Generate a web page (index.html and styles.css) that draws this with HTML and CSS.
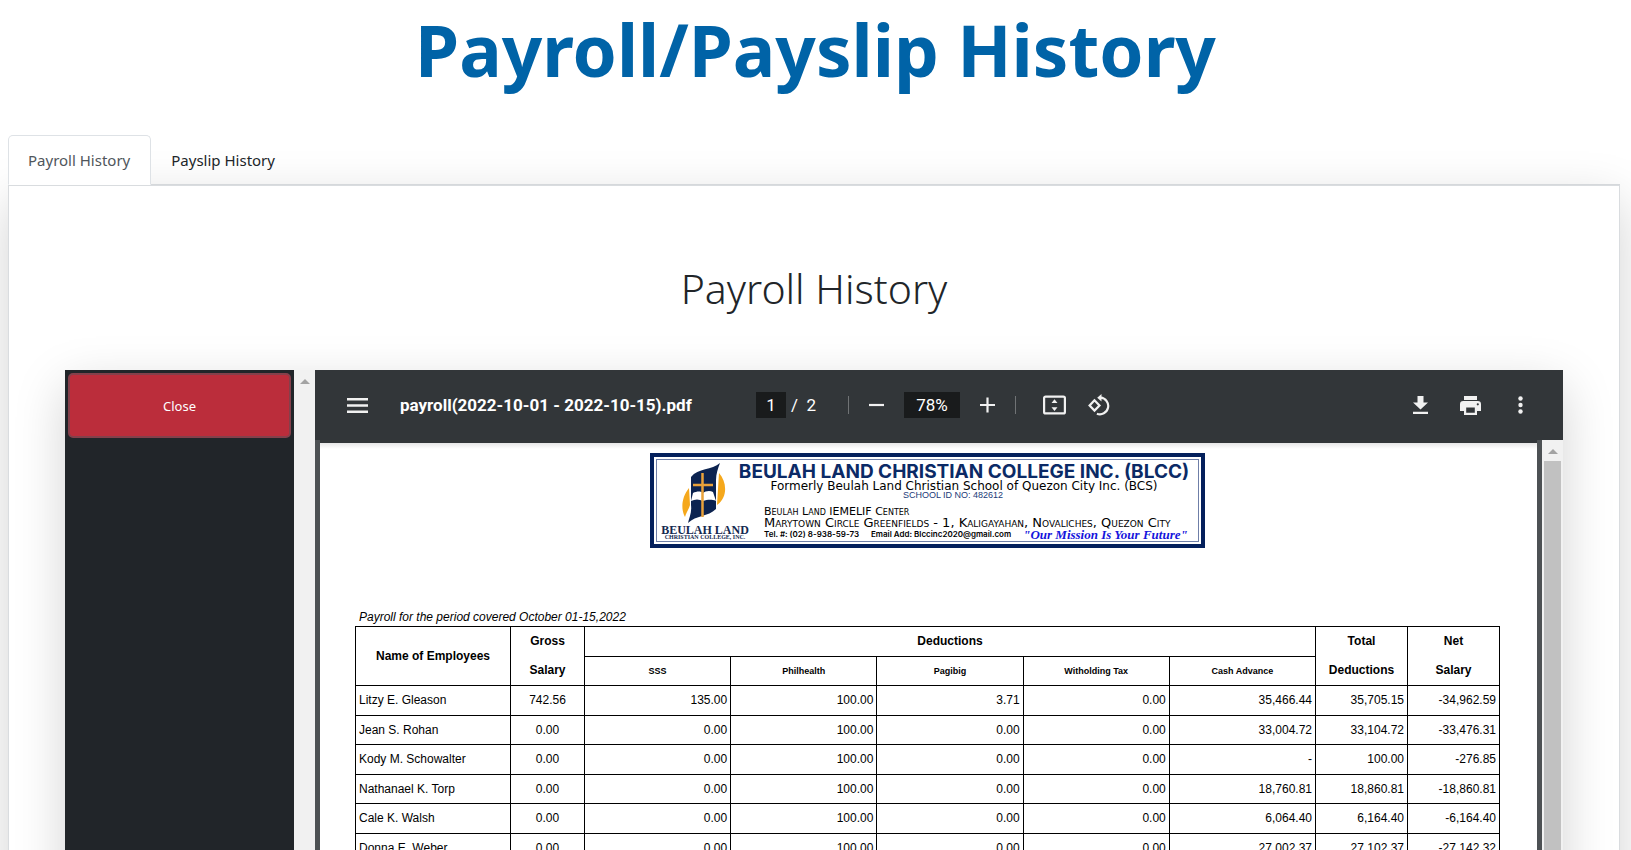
FILE: index.html
```html
<!DOCTYPE html>
<html lang="en">
<head>
<meta charset="utf-8">
<title>Payroll/Payslip History</title>
<link rel="stylesheet" href="styles.css">
</head>
<body>
<h1 class="page-title">Payroll/Payslip History</h1>
<main class="content">
  <nav class="tabs">
    <button class="tab tab-active" type="button">Payroll History</button>
    <button class="tab" type="button">Payslip History</button>
  </nav>
  <section class="card">
    <h2 class="card-title">Payroll History</h2>
    <div class="viewer">
      <aside class="side">
        <button class="close-btn" type="button">Close</button>
      </aside>
      <div class="scroll scroll-side"><span class="scroll-up"></span></div>
      <div class="pdf">
        <header class="toolbar">
          <button class="icon-btn menu" type="button" aria-label="Menu"><svg width="21" height="15" viewBox="0 0 21 15"><path d="M0 1.2h21M0 7.5h21M0 13.8h21" stroke="#f1f1f1" stroke-width="2.4"/></svg></button>
          <span class="file-name">payroll(2022-10-01 - 2022-10-15).pdf</span>
          <div class="tools">
            <input class="field page-field" type="text" value="1" aria-label="Page number">
            <span class="page-total">/&nbsp; 2</span>
            <span class="sep sep-first"></span>
            <button class="icon-btn" type="button" aria-label="Zoom out"><svg width="15" height="20" viewBox="0 0 15 20"><path d="M0 10h15" stroke="#f1f1f1" stroke-width="2.2"/></svg></button>
            <input class="field zoom-field" type="text" value="78%" aria-label="Zoom level">
            <button class="icon-btn" type="button" aria-label="Zoom in"><svg width="15" height="20" viewBox="0 0 15 20"><path d="M0 10h15M7.500 2.500v15" stroke="#f1f1f1" stroke-width="2.2"/></svg></button>
            <span class="sep"></span>
            <button class="icon-btn fit" type="button" aria-label="Fit to page"><svg width="23" height="20" viewBox="0 0 23 20"><rect x="1.100" y="1.600" width="20.800" height="16.800" rx="1.500" fill="none" stroke="#f1f1f1" stroke-width="2.2"/><path d="M11.500 4.200l3 3.800h-6zM11.500 16l3-3.800h-6z" fill="#f1f1f1"/></svg></button>
            <button class="icon-btn" type="button" aria-label="Rotate counterclockwise"><svg width="22" height="22" viewBox="0 0 22 22"><path d="M6.500 6.300L1.600 11.600l4.900 5 5-5zM12.600 3.700a8.300 8.300 0 1 1-3.700 16" fill="none" stroke="#f1f1f1" stroke-width="2.200"/><path d="M13.500 0v7.400L9.200 3.700z" fill="#f1f1f1"/></svg></button>
          </div>
          <div class="actions">
            <button class="icon-btn" type="button" aria-label="Download"><svg width="15" height="18" viewBox="0 0 15 18"><path d="M4.500 0h6v6.500H15L7.500 13.500 0 6.500h4.500zM0 15.800h15V18H0z" fill="#f1f1f1"/></svg></button>
            <button class="icon-btn" type="button" aria-label="Print"><svg width="21" height="19" viewBox="0 0 21 19"><path fill-rule="evenodd" d="M4 0h13v4H4zM3.200 5h14.600A3.200 3.200 0 0 1 21 8.200V15h-4v4H4v-4H0V8.200A3.200 3.200 0 0 1 3.200 5zM6.200 11.500v5.300h8.600v-5.300zM17.800 7.200a1.100 1.100 0 1 0 0 2.200 1.100 1.100 0 0 0 0-2.200z" fill="#f1f1f1"/></svg></button>
            <button class="icon-btn" type="button" aria-label="More actions"><svg width="5" height="18" viewBox="0 0 5 18"><circle cx="2.500" cy="2.500" r="2.200" fill="#f1f1f1"/><circle cx="2.500" cy="9" r="2.200" fill="#f1f1f1"/><circle cx="2.500" cy="15.500" r="2.200" fill="#f1f1f1"/></svg></button>
          </div>
        </header>
        <div class="pdf-body">
          <article class="sheet">
            <div class="banner">
              <div class="logo">
                <svg width="46" height="64" viewBox="0 0 46 64">
                  <path d="M7 26C-1 36-1 48 3 55c1-4 4-8 5-12zM37 11c8 9 9 24-2 32z" fill="#f5a81c"/>
                  <path d="M38 1C30 8 16 6 9 15V43c1 8-2 13-3 18 8-8 20-6 28-14V18c0-6 2-12 4-17z" fill="#0c2350"/>
                  <path d="M11 31c4-2 8-2 10 0 2-2 7-3 10-1l3 9c-5-2-9-1-13 0-4-2-8-2-12 0z" fill="#fff"/>
                  <path d="M20.500 11v44M11 23h20" stroke="#e9a13a" stroke-width="2.500"/>
                </svg>
                <strong class="logo-name">BEULAH LAND</strong>
                <span class="logo-sub">CHRISTIAN COLLEGE, INC.</span>
              </div>
              <div class="banner-text">
                <strong class="school">BEULAH LAND CHRISTIAN COLLEGE INC. (BLCC)</strong>
                <span class="formerly">Formerly Beulah Land Christian School of Quezon City Inc. (BCS)</span>
                <span class="school-id">SCHOOL ID NO: 482612</span>
                <div class="address">
                  <span>Beulah Land IEMELIF Center</span>
                  <span class="street">Marytown Circle Greenfields - 1, Kaligayahan, Novaliches, Quezon City</span>
                </div>
                <div class="contact">
                  <span>Tel. #: (02) 8-938-59-73</span>
                  <span>Email Add: Blccinc2020@gmail.com</span>
                  <em class="motto">"Our Mission Is Your Future"</em>
                </div>
              </div>
            </div>
            <table class="payroll">
              <caption>Payroll for the period covered October 01-15,2022</caption>
              <colgroup><col class="c-name"><col class="c-gross"><col><col><col><col><col><col class="c-total"><col class="c-total"></colgroup>
              <thead>
                <tr><th rowspan="2">Name of Employees</th><th class="open">Gross</th><th colspan="5">Deductions</th><th class="open">Total</th><th class="open">Net</th></tr>
                <tr><th class="under">Salary</th><th class="sub">SSS</th><th class="sub">Philhealth</th><th class="sub">Pagibig</th><th class="sub">Witholding Tax</th><th class="sub">Cash Advance</th><th class="under">Deductions</th><th class="under">Salary</th></tr>
              </thead>
              <tbody>
                <tr><td>Litzy E. Gleason</td><td>742.56</td><td>135.00</td><td>100.00</td><td>3.71</td><td>0.00</td><td>35,466.44</td><td>35,705.15</td><td>-34,962.59</td></tr>
                <tr><td>Jean S. Rohan</td><td>0.00</td><td>0.00</td><td>100.00</td><td>0.00</td><td>0.00</td><td>33,004.72</td><td>33,104.72</td><td>-33,476.31</td></tr>
                <tr><td>Kody M. Schowalter</td><td>0.00</td><td>0.00</td><td>100.00</td><td>0.00</td><td>0.00</td><td>-</td><td>100.00</td><td>-276.85</td></tr>
                <tr><td>Nathanael K. Torp</td><td>0.00</td><td>0.00</td><td>100.00</td><td>0.00</td><td>0.00</td><td>18,760.81</td><td>18,860.81</td><td>-18,860.81</td></tr>
                <tr><td>Cale K. Walsh</td><td>0.00</td><td>0.00</td><td>100.00</td><td>0.00</td><td>0.00</td><td>6,064.40</td><td>6,164.40</td><td>-6,164.40</td></tr>
                <tr><td>Donna E. Weber</td><td>0.00</td><td>0.00</td><td>100.00</td><td>0.00</td><td>0.00</td><td>27,002.37</td><td>27,102.37</td><td>-27,142.32</td></tr>
              </tbody>
            </table>
          </article>
          <div class="scroll scroll-doc"><span class="scroll-up"></span><span class="scroll-thumb"></span></div>
        </div>
      </div>
    </div>
  </section>
</main>
</body>
</html>
```
FILE: styles.css
```css
* { box-sizing: border-box; }

body {
  margin: 0;
  height: 100vh;
  overflow: hidden;
  background: #fff;
  color: #212529;
  font-family: "Noto Sans", "Open Sans", sans-serif;
  font-size: 16px;
  line-height: 24px;
}

button, input { font: inherit; }

.page-title {
  margin: 0 0 35px;
  color: #0063a7;
  font-size: 71px;
  font-weight: 700;
  line-height: 100px;
  text-align: center;
}

.content { padding: 0 11px 0 8px; }

.tabs {
  display: flex;
  position: relative;
  z-index: 1;
  border-bottom: 1px solid #d5d8db;
}

.tab {
  margin-bottom: -1px;
  padding: 12px 20px 12px 19px;
  height: 50px;
  border: 1px solid transparent;
  border-radius: 5px 5px 0 0;
  background: transparent;
  color: #212529;
  font-size: 15px;
}

.tab-active {
  border-color: #dee2e6 #dee2e6 #fff;
  background: #fff;
  color: #50565c;
}

.card {
  padding: 70px 56px 0;
  border: 1px solid #d9dcdf;
  background: #fff;
  box-shadow: 0 16px 48px rgba(0, 0, 0, 0.175);
}

.card-title {
  margin: 0 0 50px;
  font-size: 41px;
  font-weight: 300;
  line-height: 64px;
  text-align: center;
}

.viewer {
  display: flex;
  height: 100vh;
  box-shadow: 0 16px 48px rgba(0, 0, 0, 0.175);
}

.side {
  flex: none;
  width: 229px;
  padding: 3px;
  background: #212529;
}

.close-btn {
  display: block;
  width: 100%;
  height: 65px;
  padding: 0;
  border: 2px solid #84404b;
  border-radius: 5px;
  background: #bb2d3b;
  color: #fff;
  font-size: 13px;
}

.scroll {
  display: flex;
  flex: none;
  flex-direction: column;
  align-items: center;
  width: 21px;
  padding-top: 9px;
  background: #f1f1f1;
}

.scroll-up {
  border: 5px solid transparent;
  border-top: 0;
  border-bottom-color: #a3a3a3;
}

.scroll-thumb {
  flex: 1;
  width: 17px;
  margin-top: 7px;
  background: #c1c1c1;
}

.pdf {
  display: flex;
  flex: 1;
  flex-direction: column;
  min-width: 0;
  background: #4d5154;
}

.toolbar {
  display: flex;
  align-items: center;
  height: 70px;
  padding: 0 40px 0 32px;
  background: #323639;
  color: #fff;
  font-family: Roboto, sans-serif;
  font-size: 17px;
}

.icon-btn {
  display: flex;
  flex: none;
  padding: 0;
  border: 0;
  background: none;
}

.file-name {
  width: 356px;
  margin-left: 32px;
  font-weight: 700;
  white-space: nowrap;
}

.tools, .actions {
  display: flex;
  align-items: center;
}

.tools { gap: 20px; }
.actions { gap: 32px; margin-left: auto; }
.actions .icon-btn:last-child { margin-left: 5px; }

.field {
  height: 26px;
  padding: 0;
  border: 0;
  border-radius: 0;
  background: #191b1c;
  color: #fff;
  text-align: center;
}

.page-field { width: 30px; }
.zoom-field { width: 56px; }
.page-total { width: 27px; margin-left: -15px; white-space: nowrap; }

.sep {
  width: 1px;
  height: 18px;
  background: #707375;
}

.sep-first { margin-left: 10px; }
.fit { margin: 0 2px 0 7px; }

.pdf-body {
  display: flex;
  flex: 1;
  min-height: 0;
}

.sheet {
  flex: 1;
  min-width: 0;
  margin: 0 5px;
  padding: 10px 37px 0 35px;
  border-top: 3px solid #323639;
  background: linear-gradient(#e6e6e6, #fff 6px);
  color: #000;
  font-family: "Liberation Sans", Arial, sans-serif;
}

.banner {
  display: flex;
  width: 555px;
  height: 95px;
  margin: 0 auto 61px;
  padding: 4px 9px 0 5px;
  border: 4px solid #04205c;
  outline: 1px solid #6f7fa8;
  outline-offset: -7px;
}

.logo {
  display: flex;
  flex: none;
  flex-direction: column;
  align-items: center;
  width: 92px;
  padding-top: 1px;
  color: #14284f;
  white-space: nowrap;
}

.logo-name {
  font-family: "Liberation Serif", serif;
  font-size: 12px;
  line-height: 9px;
}

.logo-sub {
  font-family: "Liberation Serif", serif;
  font-size: 6px;
  font-weight: 700;
  line-height: 5px;
}

.banner-text {
  display: flex;
  flex: 1;
  flex-direction: column;
  align-items: center;
  margin-left: -15px;
  white-space: nowrap;
}

.school {
  color: #0b2a66;
  font-family: Inter, sans-serif;
  font-size: 19px;
  line-height: 21px;
}

.formerly {
  font-family: "DejaVu Sans", sans-serif;
  font-size: 12px;
  line-height: 8px;
}

.school-id {
  margin-right: 22px;
  color: #1b3a78;
  font-size: 9px;
  line-height: 10px;
}

.address {
  display: flex;
  flex-direction: column;
  align-self: flex-start;
  margin: 6px 0 0 28px;
  font-family: "DejaVu Sans", sans-serif;
  font-size: 11px;
  font-variant: small-caps;
  line-height: 11px;
}

.street { font-size: 13px; }

.contact {
  display: flex;
  align-self: flex-start;
  align-items: center;
  gap: 12px;
  margin-left: 28px;
  font-family: Inter, sans-serif;
  font-size: 8px;
  font-weight: 600;
  line-height: 13px;
}

.motto {
  color: #1414dc;
  font-family: "Liberation Serif", serif;
  font-size: 13px;
  font-weight: 700;
}

.payroll {
  width: 100%;
  border-collapse: collapse;
  table-layout: fixed;
  font-size: 12px;
  line-height: 16px;
}

.payroll caption {
  padding: 0 4px 1px;
  font-style: italic;
  text-align: left;
}

.c-name { width: 155px; }
.c-gross { width: 74px; }
.c-total { width: 92px; }

.payroll tr:nth-child(odd) { height: 30px; }
.payroll tr:nth-child(even) { height: 29px; }

.payroll th, .payroll td {
  padding: 0 3px 1px;
  border: 1px solid #000;
  text-align: right;
}

.payroll th { text-align: center; }
.payroll .sub { font-size: 9px; }
.payroll .open { border-bottom: 0; }
.payroll .under { border-top: 0; }
.payroll td:first-child { text-align: left; }
.payroll td:nth-child(2) { text-align: center; }
```
